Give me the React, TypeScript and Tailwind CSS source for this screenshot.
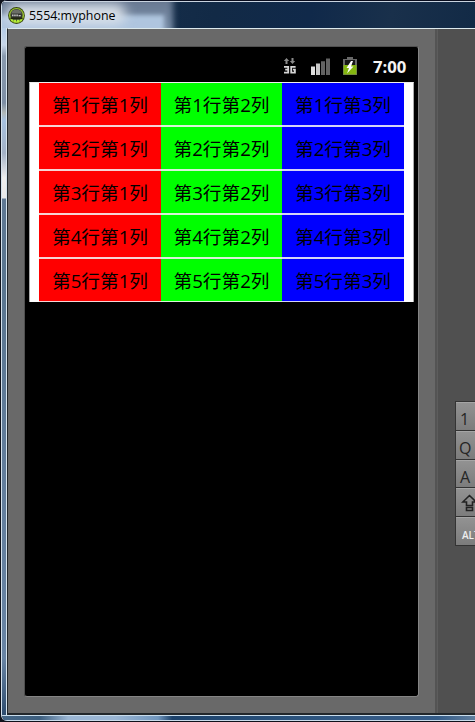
import React from 'react';

const rows = [
  { n: 1, size: 'h-[44px]', edge: 'border-b-2' },
  { n: 2, size: 'h-[44px]', edge: 'border-b-2' },
  { n: 3, size: 'h-[44px]', edge: 'border-b-2' },
  { n: 4, size: 'h-[44px]', edge: 'border-b-2' },
  { n: 5, size: 'h-[43px]', edge: 'border-b' },
];

const columns = [
  { n: 1, color: 'bg-[#ff0000] border-[#f6d4d4]', width: 'w-[122px]' },
  { n: 2, color: 'bg-[#00ff00] border-[#d8f3d8]', width: 'w-[121px]' },
  { n: 3, color: 'bg-[#0000ff] border-[#d4d4f6]', width: 'w-[122px]' },
];

function AppIcon() {
  return (
    <svg width="17" height="17" viewBox="0 0 16 16" className="mt-[2px] block shrink-0">
      <circle cx="8" cy="8" r="7.9" fill="#35450e" />
      <circle cx="8" cy="8" r="7.1" fill="#9cc434" />
      <circle cx="8" cy="7.6" r="5.8" fill="#343733" />
      <path d="M3 6a5.3 5.3 0 0 1 10 0z" fill="#6b6e67" />
      <path d="M2.3 9.8h11.4v1.4H2.3z" fill="#20250f" />
      <path d="M4 7h1.1v1.6H4zM6 7h1.1v1.6H6zM8 7h1.1v1.6H8zM10 7.7h2v.9h-2z" fill="#f1f2ee" />
      <path d="M3 11.8h2v1.5H3zM5.7 12h2v2.4h-2zM8.4 12h2v2.4h-2zM11 11.8h2v1.5h-2z" fill="#b4ee38" />
    </svg>
  );
}

function TitleBar() {
  return (
    <header className="relative h-7 shrink-0 overflow-hidden bg-[linear-gradient(100deg,#1c3450_0%,#122a46_45%,#10294a_65%,#19304b_82%,#122a46_100%)]">
      <div className="absolute -left-2 -top-1 h-10 w-[179px] bg-[linear-gradient(#65758d,#8298b2)] blur-[3px]" />
      <div className="absolute -left-3 top-[15px] h-8 w-[174px] bg-[#afc5df] blur-[2px]" />
      <div className="absolute left-1 top-1 h-[20px] w-[120px] rounded-full bg-[#dbe2ea] blur-[6px]" />
      <div className="relative flex h-7 items-center gap-[4px] pl-[6px]">
        <AppIcon />
        <span className="mt-[3px] whitespace-nowrap font-['Open_Sans',sans-serif] text-[12.4px] leading-4 text-black">5554:myphone</span>
      </div>
      <div className="absolute inset-x-0 top-0 h-px bg-[#080c1d]" />
      <div className="absolute inset-x-0 top-px h-px bg-[#c9d3df]" />
    </header>
  );
}

function StatusBar() {
  return (
    <div className="flex h-[35px] items-start pl-[258px] pt-[9px]">
      <svg width="14" height="20" viewBox="0 0 14 20" className="block shrink-0">
        <path d="M3.5 2 .8 5h1.7v3h2V5h1.7zM8.5 2h2v3h1.7L9.5 8 6.8 5h1.7z" fill="#898989" />
        <path d="M1 10.8h4.2v2.9H2.2M4.2 13.7h1v2.9H1M12.6 10.8H8.2v5.8h3.7v-2.9h-2" fill="none" stroke="#d5d5d5" strokeWidth="1.8" />
      </svg>
      <svg width="20" height="20" viewBox="0 0 20 20" className="ml-[14px] block shrink-0">
        <path d="M0 10.5h4V19H0z" fill="#dedede" />
        <path d="M5 7.5h4V19H5z" fill="#c8c8c8" />
        <path d="M10 5.2h4V19h-4zM15 2.5h4V19h-4z" fill="#626262" />
      </svg>
      <svg width="14" height="20" viewBox="0 0 14 20" className="ml-[12px] block shrink-0">
        <path d="M4 1h6v2h4v16H0V3h4z" fill="#686868" />
        <path d="M2 4h10v5H2z" fill="#171717" />
        <path d="M.5 9h13v9.5H.5z" fill="#84b610" />
        <path d="m8 5-4.5 7H6l-2 5.5 6.5-7H8l2-5.5z" fill="white" />
      </svg>
      <time className="ml-4 mt-px font-['Open_Sans',sans-serif] text-[16.7px] font-bold leading-[19px] text-[#f4f4f4]">7:00</time>
    </div>
  );
}

function DataTable() {
  return (
    <div className="ml-[4px] flex h-[220px] w-[385px] flex-col border-l border-r border-t border-[#aaa] border-t-[#eeeeee] bg-white pl-[9px]">
      {rows.map((row) => (
        <div key={row.n} className={`${row.size} flex w-[365px] shrink-0`}>
          {columns.map((col) => (
            <div key={col.n} className={`${col.color} ${col.width} ${row.edge} flex h-full shrink-0 items-start justify-center whitespace-nowrap pt-[8px] font-['Open_Sans','Noto_Sans_CJK_SC',sans-serif] text-[18.67px] leading-[27px] text-black`}>
              第{row.n}行第{col.n}列
            </div>
          ))}
        </div>
      ))}
    </div>
  );
}

function Key({ children }: { children: React.ReactNode }) {
  return (
    <div className="h-[28.75px] overflow-hidden border-b border-[#333] border-t border-t-[#a5a5a5] bg-[linear-gradient(#929292,#7c7c7c)] font-['Open_Sans',sans-serif] text-[16px] text-[#252525]">
      {children}
    </div>
  );
}

function Keyboard() {
  return (
    <aside className="w-[38px] shrink-0 overflow-hidden bg-[#505050] pl-[17px] pt-[372px]">
      <div className="h-[145px] w-6 border-l border-t border-[#343434]">
        <Key><span className="block pl-1 pt-[6px] leading-5">1</span></Key>
        <Key><span className="block pl-[3px] pt-[6px] leading-5">Q</span></Key>
        <Key><span className="block pl-1 pt-[6px] leading-5">A</span></Key>
        <Key>
          <svg width="18" height="20" viewBox="0 0 18 20" className="ml-[5px] mt-[5px] block" fill="none" stroke="#222" strokeWidth="1.6">
            <path d="M8.500 1.500 1.800 8H5.500v3.500h6V8h3.700zM5.500 13.500h6v3H5.500z" />
          </svg>
        </Key>
        <Key><span className="block pl-[6px] pt-[9px] text-[10px] font-semibold leading-4 text-[#eeeeee]">ALT</span></Key>
      </div>
    </aside>
  );
}

export default function App() {
  return (
    <div className="h-[722px] w-[475px] overflow-hidden bg-[#10131c]">
      <div className="ml-px flex h-[721px] w-[474px] flex-col overflow-hidden rounded-l-[6px] border-l border-[#d4e1ec]">
        <TitleBar />
        <div className="flex h-[687px] shrink-0">
          <div className="w-[5px] shrink-0 border-r border-[#d7e4ee] bg-[linear-gradient(#b5cce6_0px,#c7d6e8_17px,#899aae_28px,#7d8ea4_75px,#b2b9b8_85px,#a6c1df_92px,#a3b1c5_125px,#eeeeee_150px,#e8e8e8_170px,#5f7893_171px,#59758f_250px,#627d9b_440px,#6884a4_630px,#304e70_685px)]" />
          <div className="flex h-[687px] w-[468px] shrink-0 overflow-hidden border-b-2 border-l border-t border-[#22272b] border-t-[#dce9ed] bg-[#696969]">
            <section className="h-[684px] w-[427px] shrink-0 pl-4 pt-[17px]">
              <div className="h-[651px] w-[395px] rounded-[3px] border border-[#505050] border-b-[#858585] border-r-[#858585] bg-black">
                <StatusBar />
                <DataTable />
              </div>
            </section>
            <div className="w-[3px] shrink-0 border-r border-[#5d5d5d] bg-[#545454]" />
            <Keyboard />
          </div>
        </div>
        <footer className="h-[6px] shrink-0 border-y border-[#c8dceb] bg-[linear-gradient(90deg,#456686_0%,#3d5f7f_8%,#9ab6d4_14%,#9ab6d4_24%,#7096bd_33%,#1c426b_36%,#2b537d_62%,#345a85_78%,#345c88_92%,#607e9e_100%)]" />
      </div>
    </div>
  );
}
